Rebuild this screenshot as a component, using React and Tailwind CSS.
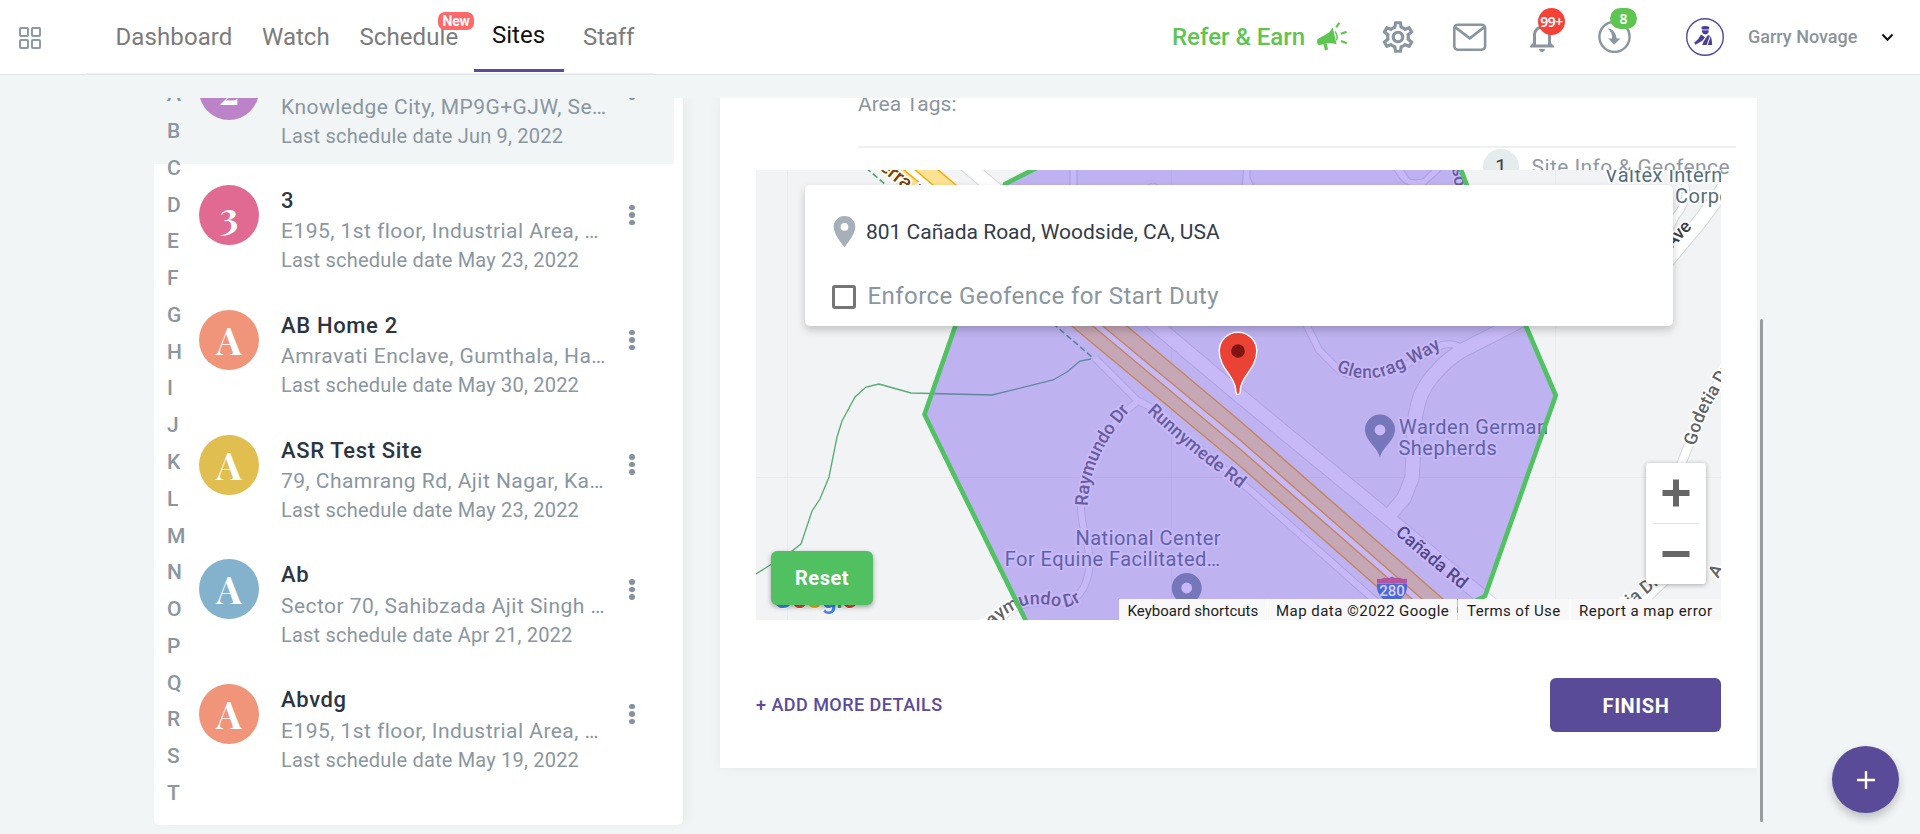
import React from "react";
import { MdOutlineSettings, MdNotificationsNone, MdLocationOn } from "react-icons/md";

const LETTERS = "ABCDEFGHIJKLMNOPQRST".split("");

const SITES = [
  { initial: "2", color: "bg-[#bc83c9]", name: "2", address: "Knowledge City, MP9G+GJW, Se…", date: "Jun 9, 2022", selected: true },
  { initial: "3", color: "bg-[#e16a93]", name: "3", address: "E195, 1st floor, Industrial Area, …", date: "May 23, 2022" },
  { initial: "A", color: "bg-[#f0957a]", name: "AB Home 2", address: "Amravati Enclave, Gumthala, Ha…", date: "May 30, 2022" },
  { initial: "A", color: "bg-[#e1be50]", name: "ASR Test Site", address: "79, Chamrang Rd, Ajit Nagar, Ka…", date: "May 23, 2022" },
  { initial: "A", color: "bg-[#84b2cd]", name: "Ab", address: "Sector 70, Sahibzada Ajit Singh …", date: "Apr 21, 2022" },
  { initial: "A", color: "bg-[#f0957a]", name: "Abvdg", address: "E195, 1st floor, Industrial Area, …", date: "May 19, 2022" },
];

function Megaphone() {
  return (
    <svg viewBox="0 0 31 30" className="h-[30px] w-[31px]" fill="#5fc551">
      <path d="M0.4 17.2 Q4.5 14.5 8.5 12.8 Q13.6 10 15.8 5.6 L19.6 22.6 Q14.4 20.3 9.3 21.6 L2 23.2 Q0 22.8 0 20 Z" />
      <path d="M6.4 22 L9.8 21.6 L11 27.4 L8 28.4 Z" />
      <path d="M18 9.5 Q21.3 13.8 19.6 18.5" fill="none" stroke="#5fc551" strokeWidth="1.4" />
      <path d="M19.2 5.4 L22.3 0.9 M23.8 11.7 L29.6 9.9 M24 18.9 L29.8 21.3" stroke="#5fc551" strokeWidth="2.2" />
    </svg>
  );
}

function Guard() {
  return (
    <svg viewBox="0 0 38 38" className="h-[38px] w-[38px]">
      <circle cx="19" cy="19" r="18.3" fill="#fff" stroke="#5246a0" strokeWidth="1.4" />
      <g fill="#4a3f96">
        <path d="M15.4 8.8 Q19 7.2 23.2 8.8 L22.8 11.6 H15.8 Z" />
        <path d="M16 12.2 H22.6 V14 Q22 16.4 19.4 16.6 Q16.7 16.4 16 14 Z" />
        <path d="M14.8 16.8 Q16.5 17.2 19 19.4 L16.4 22.8 L9.4 26.8 L8.2 24.8 L12 21.2 Z" />
        <path d="M16.2 26.9 L17.6 23.4 L21.8 17.2 L24 17.6 L20.6 26.9 Z" />
        <path d="M24.8 18 Q26 22 26.2 26.9 H21.8 Z" />
      </g>
    </svg>
  );
}

function Header() {
  return (
    <header className="relative flex h-[75px] shrink-0 border-b border-[#dfe4e6] bg-white">
      <div className="ml-[19px] mt-[27px] grid h-[22px] w-[22px] grid-cols-2 gap-[2px]">
        {[0, 1, 2, 3].map((i) => (
          <span key={i} className="rounded-[2px] border-2 border-[#8d99a3]" />
        ))}
      </div>
      <nav className="ml-[45px] flex h-[74px] w-[568px] shrink-0 border-b border-[#f1f1f1] pl-[29.5px] text-[24px] leading-[75px] text-[#7b7b7b]">
        <span className="w-[146.5px] tracking-[0.1px]">Dashboard</span>
        <span className="w-[97.5px]">Watch</span>
        <span className="relative w-[114.5px] tracking-[0.08px]">
          Schedule
          <span className="absolute left-[78.5px] top-[12px] flex h-[18px] w-[36px] items-center justify-center rounded-[7px] bg-[#ff6868] text-[14px] font-bold leading-none tracking-[-0.3px] text-white">
            New
          </span>
        </span>
        <span className="h-[72px] w-[90px] border-b-[3px] border-[#5b4b9a] pr-px text-center leading-[71px] text-[#111]">Sites</span>
        <span className="ml-[19px] tracking-[-0.1px]">Staff</span>
      </nav>
      <div className="ml-[518px] flex h-[74px] shrink-0">
        <span className="w-[145px] text-[24px] font-medium leading-[75px] text-[#5fc551]">Refer &amp; Earn</span>
        <span className="mt-[22px] w-[30px]">
          <Megaphone />
        </span>
        <span className="ml-[32px] mt-[18px]">
          <MdOutlineSettings size={38} color="#8996a0" />
        </span>
        <svg viewBox="0 0 34 28" className="ml-[36px] mt-[23px] h-[28px] w-[34px]" fill="none" stroke="#8996a0" strokeWidth="2.6">
          <rect x="1.3" y="1.7" width="30.8" height="25" rx="3.4" />
          <path d="M2.4 4.4 L16.8 15.4 L31 4.4" />
        </svg>
        <span className="relative ml-[37px] mt-[19px] w-[36px]">
          <MdNotificationsNone size={36} color="#8996a0" />
          <span className="absolute -top-[11px] left-[14px] flex h-[27px] w-[27px] items-center justify-center rounded-full bg-[#f44336] font-['Noto_Sans',sans-serif] text-[14px] font-semibold tracking-[-0.5px] text-white">
            99+
          </span>
        </span>
        <span className="relative ml-[38px] mt-[20px] w-[33px]">
          <svg viewBox="0 0 33 33" className="h-[33px] w-[33px]">
            <circle cx="16.5" cy="16.8" r="15.1" fill="none" stroke="#8996a0" strokeWidth="2.4" />
            <path d="M9.5 8.2 Q17.8 9.4 18.7 18.4 L22.4 18.4 L16.3 24.6 L10.2 18.4 L14 18.4 Q14.6 12.4 9.5 8.2 Z" fill="#8996a0" />
          </svg>
          <span className="absolute -top-[12px] left-[12px] flex h-[21px] w-[27px] items-center justify-center rounded-[11px] bg-[#5fc551] font-['Noto_Sans',sans-serif] text-[14px] font-semibold text-white">
            8
          </span>
        </span>
        <span className="ml-[55px] mt-[18px]">
          <Guard />
        </span>
        <span className="ml-[24px] w-[133px] text-[18px] font-medium leading-[73px] text-[#8a949b]">Garry Novage</span>
        <svg viewBox="0 0 13 9" className="mt-[33px] h-[9px] w-[13px]" fill="none" stroke="#111" strokeWidth="2">
          <path d="M1.5 1.5 L6.5 6.8 L11.5 1.5" />
        </svg>
      </div>
    </header>
  );
}

function SiteRow({ site }) {
  return (
    <div className={site.selected ? "flex h-[124.8px] w-[520px] bg-[#f1f5f6] pl-[45px] pt-[21px]" : "flex h-[124.8px] w-[520px] pl-[45px] pt-[21px]"}>
      <span className={`${site.color} h-[60px] w-[60px] shrink-0 rounded-full text-center font-['Playfair_Display',serif] text-[38px] font-bold leading-[60px] text-white`}>
        {site.initial}
      </span>
      <div className="ml-[22px] w-[336px] shrink-0 whitespace-nowrap text-[#8a96a0]">
        <div className="text-[22px] font-medium leading-[31.4px] tracking-[0.65px] text-[#2d3541]">{site.name}</div>
        <div className="text-[21px] leading-[30px] tracking-[0.46px]">{site.address}</div>
        <div className="text-[20px] leading-[29.2px] tracking-[0.2px]">Last schedule date {site.date}</div>
      </div>
      <div className="flex h-[60px] w-[30px] shrink-0 flex-col items-center justify-center gap-[2px]">
        {[0, 1, 2].map((i) => (
          <span key={i} className="h-[5.5px] w-[5.5px] rounded-full bg-[#8792a0]" />
        ))}
      </div>
    </div>
  );
}

function SiteList() {
  return (
    <section className="relative h-[727px] w-[529px] shrink-0 rounded-b-[6px] bg-white shadow-[6px_0_10px_rgba(0,0,0,0.03)] [clip-path:inset(0_-20px_-20px_0)]">
      <div className="h-full overflow-hidden rounded-b-[6px]">
        <div className="-mt-[58.8px] flex flex-col">
          {SITES.map((s, i) => (
            <SiteRow key={i} site={s} />
          ))}
        </div>
      </div>
      <div className="absolute inset-y-0 left-0 overflow-hidden pl-[13px]">
        <div className="-mt-[21.7px] flex flex-col text-[21px] font-medium leading-[36.77px] text-[#8a96a0]">
          {LETTERS.map((l) => (
            <span key={l}>{l}</span>
          ))}
        </div>
      </div>
    </section>
  );
}

function MapCanvas() {
  const halo = { stroke: "#fff", strokeWidth: 4, strokeLinejoin: "round", paintOrder: "stroke" };
  const roads = (
    <>
      <path d="M1095 358 L1137 400 L1150 407 L1250 490 L1371 597 L1397 620" />
      <path d="M1137 402 C1105 425 1083 470 1081 505 C1081 535 1092 545 1089 570 C1086 590 1076 602 1062 603 C1040 603 1025 600 1008 612 L985 636" />
      <path d="M1305 322 L1319 350 L1340 371 C1370 385 1400 370 1442 345 Q1456 342 1463 350" />
      <path d="M1674 160 Q1697 192 1676 216 L1668 232" />
    </>
  );
  const wideRoads = (
    <>
      <path d="M945 147 L1158 327 L1240 396 L1387 517 L1505 616" />
      <path d="M1532 314 L1508 327 L1463 350 Q1448 359 1440 368 Q1422 386 1418 404 Q1413 424 1414 440 L1412 478 L1404 498 L1388 517" />
      <path d="M1732 176 Q1712 206 1697 225 L1666 262" />
    </>
  );
  const midRoads = (
    <>
      <path d="M1674 482 L1692 437 Q1700 410 1725 372" />
      <path d="M1625 618 L1668 578 Q1690 560 1700 550" />
    </>
  );
  return (
    <svg viewBox="756 170 965 450" className="block h-[450px] w-[965px]" fontFamily="Roboto, sans-serif">
      <rect x="756" y="170" width="965" height="450" fill="#f1f3f4" />
      <path d="M787.5 170 V620 M1171.5 170 V620 M1555.5 170 V620 M756 477.5 H1721" stroke="#e8eaed" strokeWidth="1" />
      <g fill="none" strokeLinejoin="round">
        <g stroke="#d5d8dd" strokeWidth="8">{roads}</g>
        <g stroke="#d5d8dd" strokeWidth="10">{midRoads}</g>
        <g stroke="#d5d8dd" strokeWidth="15.5">{wideRoads}</g>
        <g stroke="#fff" strokeWidth="6">{roads}</g>
        <g stroke="#fff" strokeWidth="8">{midRoads}</g>
        <g stroke="#fff" strokeWidth="13.5">{wideRoads}</g>
      </g>
      <g fill="#f1f3f4" stroke="#d5d8dd" strokeWidth="1.2">
        <path d="M1070 160 V190 H1077 V160 Z M1244 160 L1242 190 H1256 L1250 178 V160 Z" fill="#fff" />
        <circle cx="1153" cy="188" r="5" />
        <path d="M1390 165 L1402 181 Q1408 187 1423 187 L1446 166 L1436 166 L1423 179 Q1412 181 1409 178 L1401 166 Z" fill="#fff" />
      </g>
      <path d="M880 170 L1073 327 L1240 466 L1391 599 L1415 620 H1467 L1443 599 L1240 421 L1128 327 L956 185 L937 170 Z" fill="#fff" />
      <g fill="#fde293" stroke="#f9ab00" strokeWidth="1.5">
        <path d="M937 169 L956 185 L1128 327 L1240 421 L1443 599 L1469 622 H1448 L1422 599 L1240 440 L1104 327 L933 185 L914 169 Z" />
        <path d="M903 169 L922 185 L1094 327 L1240 449 L1412 599 L1438 622 H1417 L1391 599 L1240 466 L1073 327 L899 185 L880 169 Z" />
      </g>
      <path d="M866 168 L886 185 L1057 327 L1092 357" fill="none" stroke="#4aa968" strokeWidth="1.6" strokeDasharray="6 3" />
      <path
        d="M1091 359 L1080 361 L1067 372 L1053 380 L992 395 L911 393 L879 384 L866 387 L855 397 L842 421 L837 437 L829 477 L820 499 L812 511 L801 544 L792 551 L756 574"
        fill="none"
        stroke="#56ab70"
        strokeWidth="1.3"
      />
      <defs>
        <path id="raymundo-n" d="M1088 506 C1088 478 1098 447 1132 408" />
        <path id="raymundo-s" d="M985 635 L997 622 Q1012 609 1026 605 Q1042 603 1055 606 Q1068 609 1078 603 L1100 590" />
        <path id="runnymede" d="M1146.5 411.5 Q1179 441.5 1199 457.5 L1250 496" />
        <path id="glencrag" d="M1336 370.5 Q1358 382 1385 376 Q1415 365 1452 341" />
        <path id="canada" d="M1395 534 Q1424 560 1475 600" />
        <path id="godetia" d="M1696 446 Q1701 420 1715 398 L1741 352" />
        <path id="godetia-s" d="M1594 637 L1668 577" />
      </defs>
      <g fontSize="18" fontWeight="500" fill="#5f6368" {...halo}>
        <text letterSpacing="-0.15"><textPath href="#raymundo-n">Raymundo Dr</textPath></text>
        <text><textPath href="#raymundo-s">Raymundo Dr</textPath></text>
        <text><textPath href="#runnymede">Runnymede Rd</textPath></text>
        <text letterSpacing="0.3"><textPath href="#glencrag">Glencrag Way</textPath></text>
        <text fill="#3c4043"><textPath href="#canada">Cañada Rd</textPath></text>
        <text><textPath href="#godetia">Godetia Dr</textPath></text>
        <text><textPath href="#godetia-s">Godetia Dr</textPath></text>
        <text fill="#3c4043" transform="translate(1672 249) rotate(-47)">Ave</text>
        <text transform="translate(1718 579) rotate(-60)">A</text>
        <text transform="translate(1452 168) rotate(80)">so</text>
        <text fill="#783f04" fontSize="20" transform="translate(869 161) rotate(39)">Serra Fwy</text>
      </g>
      <g fontSize="20" letterSpacing="0.48" fill="#546e7a" {...halo}>
        <text x="1075.5" y="545">National Center</text>
        <text x="1004.7" y="566">For Equine Facilitated…</text>
        <text x="1399" y="433.5">Warden German</text>
        <text x="1398.5" y="454.5">Shepherds</text>
        <text x="1605" y="182">Valtex International</text>
        <text x="1675" y="203">Corporation</text>
      </g>
      <g fill="#78909c">
        <path d="M1380 458 C1378 447 1365 441 1365 429.5 A15 15 0 0 1 1395 429.5 C1395 441 1382 447 1380 458 Z" />
        <path d="M1186.7 617 C1184.7 605 1171.7 599 1171.7 588 A15 15 0 0 1 1201.7 588 C1201.7 599 1188.7 605 1186.7 617 Z" />
        <circle cx="1380" cy="430" r="5.4" fill="#fff" />
        <circle cx="1186.7" cy="588" r="5.4" fill="#fff" />
      </g>
      <path
        d="M1005 184 L1080 146 L1450 140 L1466.8 185 L1526.8 328 L1555.8 395.5 L1527 477 L1485 596 L1430 624 L1300 690 L1060 690 L955 477 L924.5 414.5 L955 327 Z"
        fill="#7350eb"
        fillOpacity="0.4"
        stroke="#50c262"
        strokeWidth="4.6"
        strokeLinejoin="round"
      />
      <path d="M1377 578.5 Q1381 580 1384 577.5 Q1388 579 1392 576.5 Q1396 579 1400 577.5 Q1403 580 1407 578.5 V583 H1377 Z" fill="#b4569f" />
      <path d="M1377 583.5 H1407 Q1408 592 1402 598 L1392 606 L1382 598 Q1376 592 1377 583.5 Z" fill="#4a68d8" />
      <text x="1392" y="596.3" textAnchor="middle" fontSize="15" fontWeight="500" fill="#d9d0fa">280</text>
      <path
        d="M1238 394.5 C1236 394.5 1235.6 392.5 1235.6 389 C1234.5 376 1219.2 368 1219.2 351 A18.8 18.8 0 0 1 1256.8 351 C1256.8 368 1241.5 376 1240.4 389 C1240.4 392.5 1240 394.5 1238 394.5 Z"
        fill="#ea4335"
        stroke="#fff"
        strokeWidth="1.4"
      />
      <circle cx="1238" cy="351" r="6.8" fill="#811411" />
      <g fontSize="27" fontWeight="500" stroke="#fff" strokeWidth="2" paintOrder="stroke">
        <text x="773" y="607.8" fill="#4285f4">G</text>
        <text x="792" y="607.8" fill="#ea4335">o</text>
        <text x="807" y="607.8" fill="#fbbc04">o</text>
        <text x="821.5" y="607.8" fill="#4285f4">g</text>
        <text x="836" y="607.8" fill="#34a853">l</text>
        <text x="842" y="607.8" fill="#ea4335">e</text>
      </g>
    </svg>
  );
}

function MapPanel() {
  return (
    <div className="relative z-10 ml-[36px] h-[450px] w-[965px] overflow-hidden">
      <MapCanvas />
      <div className="absolute left-[49px] top-[15px] h-[141px] w-[868px] rounded-[5px] bg-white shadow-[0_4px_8px_rgba(0,0,0,0.2)]">
        <div className="mt-[27px] flex h-[38px] items-center pl-[21px]">
          <MdLocationOn size={37} color="#a7b0b8" />
          <span className="ml-[3px] mt-[2px] whitespace-nowrap text-[21px] leading-[38px] text-[#333c4a]">801 Cañada Road, Woodside, CA, USA</span>
        </div>
        <div className="mt-[31px] flex h-[32px] items-center pl-[27px]">
          <span className="h-[24px] w-[24px] rounded-[3px] border-[3px] border-[#757575]" />
          <span className="-mt-[2px] ml-[11.5px] text-[24px] leading-[32px] tracking-[0.43px] text-[#8a96a0]">Enforce Geofence for Start Duty</span>
        </div>
      </div>
      <button className="absolute left-[15px] top-[381px] h-[54px] w-[102px] rounded-[6px] bg-[#51c061] text-[20px] font-bold leading-[52px] tracking-[0.5px] text-white shadow-[0_2px_5px_rgba(0,0,0,0.35)]">
        Reset
      </button>
      <div className="absolute left-[890px] top-[293px] flex h-[121px] w-[60px] flex-col items-center justify-center rounded-[3px] bg-white shadow-[0_1px_5px_rgba(0,0,0,0.3)]">
        <svg viewBox="0 0 60 60" className="h-[60px] w-[60px]" fill="#666">
          <path d="M16.5 27 H27 V16.5 H33 V27 H43.5 V33 H33 V43.5 H27 V33 H16.5 Z" />
        </svg>
        <span className="h-px w-[45px] bg-[#e2e2e2]" />
        <svg viewBox="0 0 60 60" className="h-[60px] w-[60px]" fill="#666">
          <path d="M16.5 27 H43.5 V33 H16.5 Z" />
        </svg>
      </div>
      <div className="absolute bottom-0 left-[363px] flex h-[21px] overflow-hidden whitespace-nowrap text-[15px] leading-[24px] tracking-[0.47px] text-[#1c1c1c]">
        <span className="w-[149px] border-r border-white bg-[#f8f8f8] pl-[8.5px] tracking-[0.04px]">Keyboard shortcuts</span>
        <span className="mr-px w-[189px] bg-[#f8f8f8] pl-[8px]">Map data ©2022 Google</span>
        <span className="w-[113px] border-r-2 border-white bg-[#f8f8f8] pl-[9px] tracking-[0.4px]">Terms of Use</span>
        <span className="w-[150px] bg-[#f8f8f8] pl-[8px]">Report a map error</span>
      </div>
    </div>
  );
}

function SiteDetails() {
  return (
    <section className="h-[670px] w-[1037px] shrink-0 bg-white shadow-[0_0_12px_rgba(0,0,0,0.06)] [clip-path:inset(0_0_-20px_-20px)]">
      <div className="h-[50px] overflow-hidden">
        <div className="-mt-[9px] ml-[138px] mr-[21px] h-[59px] border-b-2 border-[#efefef] text-[21px] leading-[30px] text-[#8a96a0]">Area Tags:</div>
      </div>
      <div className="flex h-[22px] pl-[763px] pt-px text-[21px] leading-[36px]">
        <span className="h-[36px] w-[36px] shrink-0 rounded-full bg-[#e4ecee] text-center text-[#444]">1</span>
        <span className="ml-[12.5px] shrink-0 whitespace-nowrap tracking-[0.42px] text-[#9099a3]">Site Info &amp; Geofence</span>
      </div>
      <MapPanel />
      <div className="ml-[36px] mt-[58px] flex h-[54px] w-[965px] items-center justify-between">
        <span className="-mt-[2px] text-[18px] font-medium tracking-[0.46px] text-[#5b4b9a]">+ ADD MORE DETAILS</span>
        <button className="h-[54px] w-[171px] rounded-[6px] bg-[#594b98] pl-px pt-px text-[20px] font-bold tracking-[0.6px] text-white">FINISH</button>
      </div>
    </section>
  );
}

export default function App() {
  return (
    <div className="relative flex h-[834px] w-[1920px] flex-col overflow-hidden bg-[#f1f5f6] font-['Roboto',sans-serif]">
      <Header />
      <main className="flex items-start pl-[154px] pt-[23px]">
        <SiteList />
        <div className="ml-[37px]">
          <SiteDetails />
        </div>
        <span className="ml-[3px] mt-[221px] h-[503px] w-[3px] rounded-full bg-[#999c9e]" />
      </main>
      <button className="absolute left-[1832px] top-[746px] flex h-[67px] w-[67px] items-center justify-center rounded-full bg-[#594b98] shadow-[0_5px_10px_rgba(0,0,0,0.22)]">
        <svg viewBox="0 0 20 20" className="h-[20px] w-[20px]" stroke="#fff" strokeWidth="2.4">
          <path d="M10 1 V19 M1 10 H19" />
        </svg>
      </button>
    </div>
  );
}
